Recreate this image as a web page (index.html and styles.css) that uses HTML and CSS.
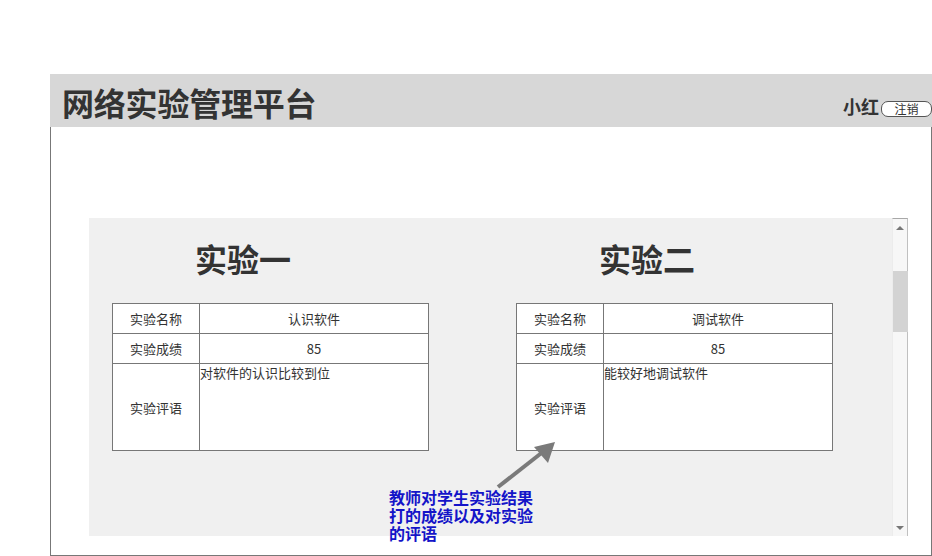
FILE: index.html
```html
<!DOCTYPE html>
<html lang="zh">
<head>
<meta charset="utf-8">
<title>网络实验管理平台</title>
<link rel="stylesheet" href="styles.css">
</head>
<body>
<div class="page">
  <header class="header">
    <h1 class="brand">网络实验管理平台</h1>
    <div class="user">
      <span class="user-name">小红</span>
      <button class="logout">注销</button>
    </div>
  </header>
  <main class="frame">
    <section class="panel">
      <div class="panel-content">
        <div class="experiment">
          <h2 class="exp-title">实验一</h2>
          <table class="exp-table">
            <tr class="row-short"><td class="label">实验名称</td><td class="value">认识软件</td></tr>
            <tr class="row-short"><td class="label">实验成绩</td><td class="value">85</td></tr>
            <tr class="row-tall"><td class="label">实验评语</td><td class="comment">对软件的认识比较到位</td></tr>
          </table>
        </div>
        <div class="experiment">
          <h2 class="exp-title">实验二</h2>
          <table class="exp-table">
            <tr class="row-short"><td class="label">实验名称</td><td class="value">调试软件</td></tr>
            <tr class="row-short"><td class="label">实验成绩</td><td class="value">85</td></tr>
            <tr class="row-tall"><td class="label">实验评语</td><td class="comment">能较好地调试软件</td></tr>
          </table>
        </div>
      </div>
      <div class="scrollbar">
        <span class="arrow-up"></span>
        <span class="thumb"></span>
        <span class="track"></span>
        <span class="arrow-down"></span>
      </div>
    </section>
    <div class="annotation">
      <svg class="annot-arrow" width="70" height="60" viewBox="0 0 70 60">
        <line x1="8" y1="54" x2="54" y2="18" stroke="#7a7a7a" stroke-width="4"/>
        <polygon points="65,9 44,14 58,30" fill="#7a7a7a"/>
      </svg>
      <p class="annot-text"><span class="annot-line">教师对学生实验结果</span><span class="annot-line">打的成绩以及对实验</span><span class="annot-line">的评语</span></p>
    </div>
  </main>
</div>
</body>
</html>
```

FILE: styles.css
```css
html, body {
  margin: 0;
  padding: 0;
  background: #ffffff;
}
body {
  font-family: "Noto Sans CJK SC", "Liberation Sans", sans-serif;
  color: #333333;
}
.page {
  padding-top: 74px;
  padding-left: 50px;
  width: 882px;
}
.header {
  height: 53px;
  background: #d7d7d7;
  display: flex;
  justify-content: space-between;
  align-items: flex-start;
}
.brand {
  margin: 0;
  padding-left: 12px;
  font-size: 32px;
  line-height: 46px;
  padding-top: 5px;
  font-weight: 700;
  color: #333333;
  letter-spacing: -0.2px;
}
.user {
  display: flex;
  align-items: flex-end;
  padding-top: 20px;
}
.user-name {
  font-size: 18px;
  line-height: 24px;
  font-weight: 700;
  color: #333333;
}
.logout {
  width: 51px;
  height: 16px;
  margin: 0 0 1px 2px;
  padding: 0 0 1px 0;
  border: 1px solid #555555;
  border-radius: 7px;
  background: #ffffff;
  font-family: "Noto Sans CJK SC", sans-serif;
  font-size: 12px;
  line-height: 12px;
  color: #333333;
}
.frame {
  position: relative;
  height: 429px;
  border: 1px solid #777777;
  border-top: none;
  padding: 91px 0 0 38px;
  box-sizing: border-box;
}
.panel {
  display: flex;
  width: 819px;
  height: 318px;
}
.panel-content {
  flex: 1;
  background: #f0f0f0;
  display: flex;
  gap: 87px;
  padding-left: 23px;
}
.experiment {
  width: 317px;
  display: flex;
  flex-direction: column;
}
.exp-title {
  margin: 20px 0 0 83px;
  font-size: 32px;
  line-height: 40px;
  font-weight: 700;
  color: #333333;
}
.exp-table {
  margin-top: 25px;
  width: 317px;
  border-collapse: collapse;
  background: #ffffff;
  font-size: 13px;
  color: #333333;
}
.exp-table td {
  border: 1px solid #777777;
  padding: 0;
}
.row-short td {
  height: 29px;
}
.row-tall td {
  height: 86px;
}
.label {
  width: 86px;
  text-align: center;
}
.value {
  text-align: center;
}
.comment {
  vertical-align: top;
  padding: 0 1px 0 1px;
  line-height: 17px;
}
.scrollbar {
  width: 16px;
  background: #f7f7f7;
  border-top: 1px solid #a8a8a8;
  border-right: 1px solid #c0c0c0;
  border-left: 1px solid #ececec;
  display: flex;
  flex-direction: column;
  align-items: center;
  box-sizing: border-box;
}
.arrow-up, .arrow-down {
  width: 0;
  height: 0;
  border-left: 4px solid transparent;
  border-right: 4px solid transparent;
}
.arrow-up {
  margin-top: 7px;
  border-bottom: 4px solid #777777;
}
.arrow-down {
  margin-bottom: 6px;
  border-top: 4px solid #777777;
}
.thumb {
  width: 15px;
  height: 61px;
  margin-top: 41px;
  background: #d3d3d3;
}
.track {
  flex: 1;
}
.annotation {
  position: absolute;
  left: 338px;
  top: 312px;
}
.annot-arrow {
  position: absolute;
  left: 101px;
  top: -6px;
}
.annot-text {
  position: absolute;
  left: 0;
  top: 49px;
  margin: 0;
  width: 170px;
  display: flex;
  flex-direction: column;
  font-size: 16px;
  font-weight: 700;
  color: #1414c8;
}
.annot-line {
  display: block;
  height: 18px;
  line-height: 18px;
  overflow: visible;
}
```
